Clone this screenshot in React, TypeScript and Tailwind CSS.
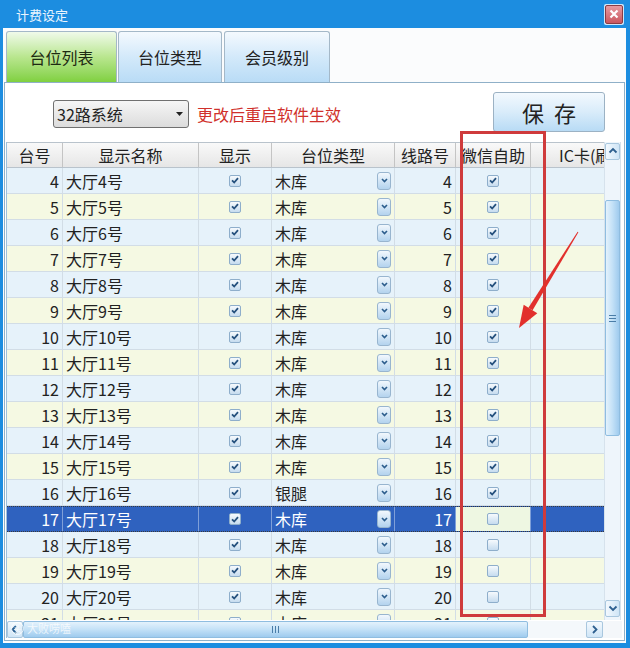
import React from "react";

const ROWS = Array.from({ length: 18 }, (_, i) => i + 4);
const SELECTED = 17;

function Check({ on }: { on: boolean }) {
  return (
    <span className="w-[12px] h-[12px] rounded-[2px] border border-[#8eaecb] bg-gradient-to-b from-[#f6fafd] to-[#c6dcef] flex items-center justify-center">
      {on && (
        <svg width="8" height="7" viewBox="0 0 8 7">
          <path d="M1 3.4 L3.2 5.5 L7 1.2" fill="none" stroke="#24507d" strokeWidth="1.8" />
        </svg>
      )}
    </span>
  );
}

function DropBtn() {
  return (
    <span className="w-[14px] h-[18px] rounded-[3px] border border-[#98b5cf] bg-gradient-to-b from-[#f2f8fd] to-[#b3d3ee] flex items-center justify-center">
      <svg width="7" height="5" viewBox="0 0 7 5">
        <path d="M1 1 L3.5 3.6 L6 1" fill="none" stroke="#2c5d8c" strokeWidth="1.6" />
      </svg>
    </span>
  );
}

function Arrow({ dir }: { dir: "up" | "down" | "left" | "right" }) {
  const d =
    dir === "up"
      ? "M1.5 5.5 L5 2 L8.5 5.5"
      : dir === "down"
      ? "M1.5 2.5 L5 6 L8.5 2.5"
      : dir === "left"
      ? "M6 1 L2.5 4.5 L6 8"
      : "M3 1 L6.5 4.5 L3 8";
  return (
    <svg width="10" height="9" viewBox="0 0 10 9">
      <path d={d} fill="none" stroke="#2d5f8f" strokeWidth="1.8" />
    </svg>
  );
}

export default function App() {
  return (
    <div className="w-[630px] h-[648px] bg-[#1c8de0] relative overflow-hidden flex flex-col font-['Noto_Sans_CJK_SC','Noto_Sans',sans-serif] text-[#222]">
      {/* Title bar */}
      <div className="h-[28px] flex items-center justify-between pl-[16px] pr-[6px]">
        <span className="text-[13px] text-[#eaf5ff] leading-none">计费设定</span>
        <div className="w-[20px] h-[21px] p-[1px] bg-[#cfe6f8] rounded-[2px]">
          <div className="w-full h-full rounded-[2px] border border-[#8a3c44] bg-gradient-to-b from-[#e79aa0] to-[#c9565f] flex items-center justify-center">
            <svg width="10" height="10" viewBox="0 0 10 10">
              <path d="M1.5 1.5 L8.5 8.5 M8.5 1.5 L1.5 8.5" stroke="#fff" strokeWidth="2.2" />
            </svg>
          </div>
        </div>
      </div>

      {/* Body */}
      <div className="flex-1 ml-[3px] mr-[4px] mb-[5px] bg-[#fbfcfd] flex flex-col">
        {/* Tabs */}
        <div className="h-[54px] pt-[3px] pl-[3px] flex items-end">
          <div className="w-[111px] h-[51px] rounded-t-[3px] border border-b-0 border-[#a4b8c8] bg-gradient-to-b from-[#f0faea] via-[#b9e68e] to-[#80d03e] flex items-center justify-center text-[16px] text-[#1d2a12]">
            台位列表
          </div>
          <div className="ml-[1px] w-[104px] h-[51px] rounded-t-[3px] border border-b-0 border-[#a4b8c8] bg-gradient-to-b from-[#f4f9fe] via-[#d3e9fa] to-[#b9dcf6] flex items-center justify-center text-[16px]">
            台位类型
          </div>
          <div className="ml-[2px] w-[106px] h-[51px] rounded-t-[3px] border border-b-0 border-[#a4b8c8] bg-gradient-to-b from-[#f4f9fe] via-[#d3e9fa] to-[#b9dcf6] flex items-center justify-center text-[16px]">
            会员级别
          </div>
        </div>

        {/* Panel */}
        <div className="flex-1 mx-[1px] mb-[2px] border border-[#8fb0c8] bg-white flex flex-col">
          {/* Toolbar */}
          <div className="h-[59px] flex items-start">
            <div className="ml-[48px] mt-[17px] w-[136px] h-[28px] rounded-[3px] border border-[#707070] bg-gradient-to-b from-[#f6f6f6] to-[#dcdcdc] flex items-center justify-between pl-[3px] pr-[5px]">
              <span className="text-[16px] leading-none">32路系统</span>
              <svg width="7" height="4" viewBox="0 0 7 4">
                <path d="M0 0 L7 0 L3.5 4 Z" fill="#222" />
              </svg>
            </div>
            <span className="ml-[8px] mt-[17px] h-[28px] flex items-center text-[16px] text-[#d0302b]">
              更改后重启软件生效
            </span>
            <div className="ml-auto mr-[19px] mt-[9px] w-[112px] h-[40px] rounded-[3px] border border-[#9cb2c4] bg-gradient-to-b from-[#f3f9fe] via-[#d9ecfa] to-[#b8dbf5] flex items-center justify-center gap-[10px] text-[22px]">
              <span>保</span>
              <span>存</span>
            </div>
          </div>

          {/* Grid */}
          <div className="ml-[1px] w-[616px] h-[496px] flex flex-col border-l border-[#9cc0dc]">
            <div className="h-[478px] flex">
              <div className="w-[597px] flex flex-col">
                {/* Header */}
                <div className="h-[26px] flex border-y border-[#b9c3cc] bg-gradient-to-b from-[#f9f9f9] to-[#e6e6e6] text-[16px]">
                  <div className="w-[56px] border-r border-[#c4c4c4] flex items-center justify-center">台号</div>
                  <div className="w-[136px] border-r border-[#c4c4c4] flex items-center justify-center">显示名称</div>
                  <div className="w-[73px] border-r border-[#c4c4c4] flex items-center justify-center">显示</div>
                  <div className="w-[123px] border-r border-[#c4c4c4] flex items-center justify-center">台位类型</div>
                  <div className="w-[61px] border-r border-[#c4c4c4] flex items-center justify-center">线路号</div>
                  <div className="w-[75px] border-r border-[#c4c4c4] flex items-center justify-center">微信自助</div>
                  <div className="w-[73px] overflow-hidden flex items-center pl-[28px] whitespace-nowrap">IC卡(刷卡)</div>
                </div>

                {/* Rows */}
                <div className="h-[452px] overflow-hidden">
                  {ROWS.map((n) => {
                    const sel = n === SELECTED;
                    const even = n % 2 === 0;
                    const rowBg = sel ? "bg-[#2f62bf] text-white" : even ? "bg-[#e6f2fa]" : "bg-[#f5f9e3]";
                    const rowBorder = sel ? "border-y border-dotted border-[#3a3a3a]" : "border-b border-[#d2dde6]";
                    const cellBorder = sel ? "border-r border-[#7f9fd8]" : "border-r border-[#d2dde6]";
                    return (
                      <div key={n} className={`h-[26px] flex text-[16px] ${rowBg} ${rowBorder}`}>
                        <div className={`w-[56px] ${cellBorder} flex items-center justify-end pr-[3px]`}>{n}</div>
                        <div className={`w-[136px] ${cellBorder} flex items-center pl-[3px]`}>大厅{n}号</div>
                        <div className={`w-[73px] ${cellBorder} flex items-center justify-center`}>
                          <Check on={true} />
                        </div>
                        <div className={`w-[123px] ${cellBorder} flex items-center justify-between pl-[3px] pr-[3px]`}>
                          <span>{n === 16 ? "银腿" : "木库"}</span>
                          <DropBtn />
                        </div>
                        <div className={`w-[61px] ${cellBorder} flex items-center justify-end pr-[3px]`}>{n}</div>
                        <div className={`w-[75px] ${cellBorder} flex items-center justify-center ${sel ? "bg-[#eef7e2]" : ""}`}>
                          <Check on={n <= 16} />
                        </div>
                        <div className="w-[73px]" />
                      </div>
                    );
                  })}
                </div>
              </div>

              {/* Vertical scrollbar */}
              <div className="w-[17px] flex flex-col bg-[#eef5fb] border-x border-[#d6e2ec]">
                <div className="h-[17px] mt-[1px] rounded-[2px] border border-[#a9c7de] bg-gradient-to-r from-[#f3f9fe] to-[#cfe5f6] flex items-center justify-center">
                  <Arrow dir="up" />
                </div>
                <div className="flex-1">
                  <div className="mt-[40px] h-[236px] rounded-[2px] border border-[#8fbde0] bg-gradient-to-r from-[#e4f2fc] via-[#c3e1f7] to-[#9fcbee] flex flex-col items-center justify-center gap-[2px]">
                    <span className="w-[7px] h-px bg-[#4a7da8]" />
                    <span className="w-[7px] h-px bg-[#4a7da8]" />
                    <span className="w-[7px] h-px bg-[#4a7da8]" />
                  </div>
                </div>
                <div className="h-[17px] mb-[3px] rounded-[2px] border border-[#a9c7de] bg-gradient-to-r from-[#f3f9fe] to-[#cfe5f6] flex items-center justify-center">
                  <Arrow dir="down" />
                </div>
              </div>
            </div>

            {/* Horizontal scrollbar */}
            <div className="h-[17px] mt-[1px] flex bg-[#eef5fb] relative">
              <div className="w-[16px] rounded-[2px] border border-[#a9c7de] bg-gradient-to-b from-[#f3f9fe] to-[#cfe5f6] flex items-center justify-center">
                <Arrow dir="left" />
              </div>
              <div className="w-[505px] rounded-[2px] border border-[#8fbde0] bg-gradient-to-b from-[#e4f2fc] via-[#c3e1f7] to-[#9fcbee] flex items-center justify-center gap-[2px]">
                <span className="w-px h-[7px] bg-[#4a7da8]" />
                <span className="w-px h-[7px] bg-[#4a7da8]" />
                <span className="w-px h-[7px] bg-[#4a7da8]" />
              </div>
              <div className="flex-1 bg-[#f4f8fb]" />
              <div className="w-[17px] rounded-[2px] border border-[#a9c7de] bg-gradient-to-b from-[#f3f9fe] to-[#cfe5f6] flex items-center justify-center">
                <Arrow dir="right" />
              </div>
              <div className="w-[19px] bg-[#f4f7fa]" />

              {/* Watermark */}
              <div className="absolute left-[4px] top-[1px] flex items-center gap-[3px] text-[11px] leading-none text-white/75 pointer-events-none">
                <span className="w-[13px] h-[13px] rounded-full border border-white/75 text-[8px] flex items-center justify-center">头</span>
                <span>大败唠嗑</span>
              </div>
            </div>
          </div>
        </div>
      </div>

      {/* Highlight box */}
      <div className="absolute left-[460px] top-[131px] w-[86px] h-[486px] border-[3px] border-[#cf3b3c] pointer-events-none" />

      {/* Red arrow */}
      <svg className="absolute left-0 top-0 pointer-events-none" width="630" height="648" viewBox="0 0 630 648">
        <polygon points="578.4,232.3 577.6,231.7 528.4,307.7 532.6,310.3" fill="#e2302c" />
        <polygon points="519,328 523.7,304.8 530.5,309 537.3,313.2" fill="#e2302c" />
      </svg>
    </div>
  );
}
